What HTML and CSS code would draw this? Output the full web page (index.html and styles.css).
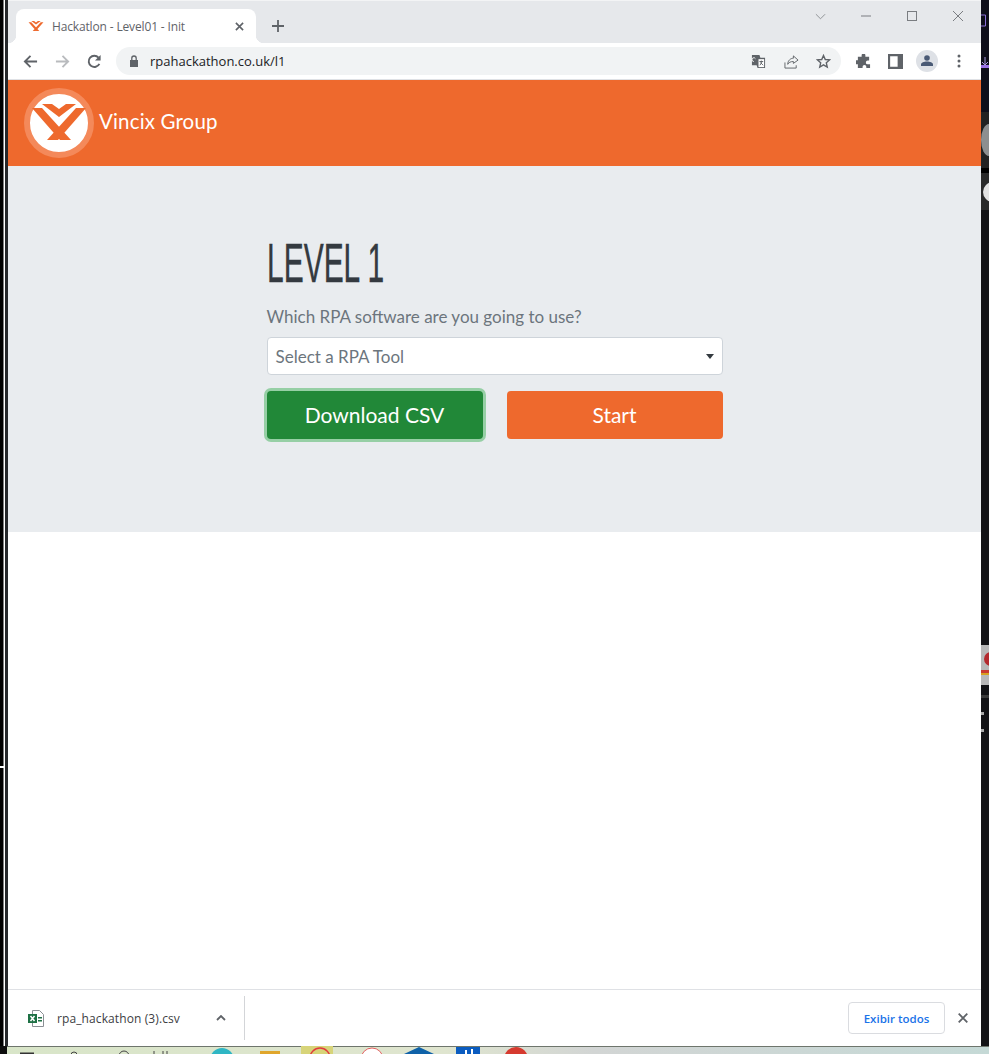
FILE: index.html
```html
<!DOCTYPE html>
<html lang="en">
<head>
<meta charset="utf-8">
<title>Hackatlon - Level01 - Init</title>
<link rel="stylesheet" href="styles.css">
</head>
<body>
<div class="desktop">
  <svg class="edge" viewBox="0 0 8 1046" aria-hidden="true">
    <rect width="8" height="1046" fill="#fff"/>
    <rect width="3.5" height="766" fill="#000"/>
    <rect y="768" width="3.5" height="278" fill="#000"/>
    <rect x="5" width="3" height="1046" fill="#26282b"/>
  </svg>
  <main class="window">
    <div class="tabstrip">
      <div class="tab">
        <svg class="favicon" viewBox="30 102 58 40" aria-hidden="true"><path fill="#ee692d" d="M32 108h10l29 32H60zM76 108h10L58 140H47zM42 104h10l7 5 7-5h10l-17 13z"/></svg>
        <span class="tab-title">Hackatlon - Level01 - Init</span>
        <svg class="tab-close" viewBox="0 0 10 10" aria-hidden="true"><path d="M1 1l8 8M9 1l-8 8"/></svg>
      </div>
      <svg class="new-tab" viewBox="0 0 12 12" aria-hidden="true"><path d="M6 0v12M0 6h12"/></svg>
      <div class="win-controls">
        <span class="win-btn"><svg viewBox="0 0 12 7" class="win-chevron" aria-hidden="true"><path d="M1 1l5 5 5-5"/></svg></span>
        <span class="win-btn"><svg viewBox="0 0 10 10" class="win-icon" aria-hidden="true"><path d="M0 5h10"/></svg></span>
        <span class="win-btn"><svg viewBox="0 0 10 10" class="win-icon" aria-hidden="true"><rect x=".5" y=".5" width="9" height="9"/></svg></span>
        <span class="win-btn"><svg viewBox="0 0 10 10" class="win-icon" aria-hidden="true"><path d="M0 0l10 10M10 0L0 10"/></svg></span>
      </div>
    </div>
    <div class="toolbar">
      <span class="tool"><svg viewBox="0 0 16 16" class="ico-stroke" aria-hidden="true"><path d="M15 8H2M8 2L2 8l6 6"/></svg></span>
      <span class="tool"><svg viewBox="0 0 16 16" class="ico-stroke ico-off" aria-hidden="true"><path d="M1 8h13M8 2l6 6-6 6"/></svg></span>
      <span class="tool"><svg viewBox="0 0 16 16" class="ico-stroke" aria-hidden="true"><path d="M13.2 10.5A6 6 0 1 1 12.3 3.8"/><path class="ico-fill" d="M14.5 1v6h-6z"/></svg></span>
      <div class="omnibox">
        <svg class="lock" viewBox="0 0 10 12" aria-hidden="true"><path d="M1 5h8v7H1z"/><path class="lock-arc" d="M2.800 5V3.200a2.200 2.200 0 0 1 4.400 0V5"/></svg>
        <span class="url">rpahackathon.co.uk/l1</span>
        <div class="omni-icons">
          <span class="omni-icon"><svg viewBox="0 0 16 16" aria-hidden="true"><path fill="#5f6368" d="M1 1h8l1 3h5v11H7l-1-3H1z"/><path fill="#fff" d="M8 5.500h6v8.500H8z"/><path fill="none" stroke="#fff" d="M3 8a2 2 0 1 1 1.700-3"/><path fill="none" stroke="#5f6368" d="M9 8h4M11 7v1M12 8l-2.500 4M10 9l3 3"/></svg></span>
          <span class="omni-icon"><svg viewBox="0 0 16 16" class="ico-thin" aria-hidden="true"><path d="M1 9v6h12v-3"/><path d="M4 11c0-4 3-6.500 6-6.500V2l5 4.500L10 10V8c-3 0-5 1-6 3z"/></svg></span>
          <span class="omni-icon"><svg viewBox="0 0 16 16" class="ico-thin ico-bold" aria-hidden="true"><path d="M8 1.600l1.900 4.300 4.600.4-3.500 3.100 1 4.600L8 11.600l-4 2.400 1-4.600-3.500-3.100 4.600-.4z"/></svg></span>
        </div>
      </div>
      <span class="tool tool-first"><svg viewBox="0 0 16 16" aria-hidden="true"><path fill="#5f6368" d="M6 1.500a2 2 0 0 1 4 0V3h4v4h-1.500a2 2 0 0 0 0 4H15v4h-4v-1.300a2 2 0 0 0-4 0V15H2v-4H.8a2.200 2.200 0 0 1 0-4.400H2V3h4z"/></svg></span>
      <span class="tool"><svg viewBox="0 0 14 14" aria-hidden="true"><path fill="#5f6368" fill-rule="evenodd" d="M0 0h14v14H0zM2 2v10h7V2z"/></svg></span>
      <span class="tool"><span class="avatar"><svg viewBox="0 0 12 12" aria-hidden="true"><circle cx="6" cy="3" r="2.800" fill="#4a5a75"/><path fill="#4a5a75" d="M0 11V9.500C0 7.500 3 6.500 6 6.500s6 1 6 3V11z"/></svg></span></span>
      <span class="tool"><svg viewBox="0 0 4 14" class="dots" aria-hidden="true"><circle cx="2" cy="2" r="1.500"/><circle cx="2" cy="7" r="1.500"/><circle cx="2" cy="12" r="1.500"/></svg></span>
    </div>
    <header class="site-header">
      <span class="logo"><svg viewBox="24 88 70 70" aria-hidden="true"><circle cx="59" cy="123" r="32" fill="#fff" stroke="#f4895a" stroke-width="6"/><path fill="#ee692d" d="M32 108h10l29 32H60zM76 108h10L58 140H47zM42 104h10l7 5 7-5h10l-17 13z"/></svg></span>
      <span class="brand">Vincix Group</span>
    </header>
    <section class="hero">
      <div class="hero-inner">
        <h1 class="title">LEVEL 1</h1>
        <p class="prompt">Which RPA software are you going to use?</p>
        <div class="select"><span>Select a RPA Tool</span><span class="caret"></span></div>
        <div class="actions">
          <button class="btn btn-green" type="button">Download CSV</button>
          <button class="btn btn-orange" type="button">Start</button>
        </div>
      </div>
    </section>
    <div class="blank"></div>
    <footer class="downloads">
      <svg class="xl" viewBox="0 0 16 17" aria-hidden="true"><path fill="#fff" stroke="#8a8f94" d="M4.500.5h7l4 4v12h-11z"/><rect y="4" width="9" height="9" fill="#1e7145"/><path stroke="#fff" stroke-width="1.500" d="M2.500 6l4 5M6.500 6l-4 5"/><path fill="#1e7145" d="M10 7h4v1.500h-4zM10 10h4v1.500h-4z"/></svg>
      <span class="file-name">rpa_hackathon (3).csv</span>
      <svg class="file-caret" viewBox="0 0 10 6" aria-hidden="true"><path d="M1 5l4-4 4 4"/></svg>
      <span class="divider"></span>
      <button class="show-all" type="button">Exibir todos</button>
      <svg class="bar-close" viewBox="0 0 10 10" aria-hidden="true"><path d="M.7.700l8.600 8.600M9.300.700L.7 9.300"/></svg>
    </footer>
  </main>
  <svg class="edge" viewBox="0 0 8 1046" aria-hidden="true">
    <rect width="8" height="1046" fill="#131316"/>
    <rect width="8" height="112" fill="#0e0e1a"/>
    <path d="M0 15h4.500v11H0" fill="none" stroke="#8a6fd8"/>
    <path d="M4 57v8M1 62l3 3 3-3" fill="none" stroke="#a999dd"/>
    <rect y="65" width="8" height="3" fill="#9a72e4"/>
    <rect y="112" width="8" height="56" fill="#222"/>
    <ellipse cx="8" cy="140" rx="8" ry="16" fill="#8d8f90"/>
    <rect y="168" width="8" height="5" fill="#000"/>
    <rect y="173" width="8" height="37" fill="#2a2a2a"/>
    <circle cx="12" cy="192" r="10" fill="#e2e2e2"/>
    <rect y="645" width="8" height="40" fill="#b8b8b8"/>
    <circle cx="10" cy="659" r="7" fill="#b32a2e"/>
    <rect y="670" width="8" height="3" fill="#c93a30"/>
    <rect y="673" width="8" height="2" fill="#d8a020"/>
    <rect y="695" width="8" height="3" fill="#3a3a3a"/>
    <rect y="712" width="3" height="3" fill="#aaa"/>
    <rect y="729" width="3" height="3" fill="#aaa"/>
  </svg>
  <svg class="taskbar" viewBox="0 0 989 8" preserveAspectRatio="none" aria-hidden="true">
    <defs><linearGradient id="tb" x1="0" x2="1" y1="0" y2="0"><stop offset="0" stop-color="#d8e5c8"/><stop offset=".45" stop-color="#dfe5cf"/><stop offset=".6" stop-color="#d2d5d4"/><stop offset="1" stop-color="#c5d9d6"/></linearGradient></defs>
    <rect width="989" height="8" fill="url(#tb)"/>
    <rect width="989" height="1" fill="#6e756c"/>
    <rect width="7" height="8" fill="#0c0c0c"/>
    <rect x="20" y="6.500" width="14" height="1.500" fill="#333"/>
    <circle cx="74" cy="9" r="3" fill="none" stroke="#444"/>
    <circle cx="124" cy="10" r="5" fill="none" stroke="#444"/>
    <path d="M154 5v3M163 5v3M167 5v3" stroke="#444"/>
    <circle cx="222" cy="14" r="12" fill="#2fb6c4"/>
    <rect x="260" y="5" width="20" height="3" fill="#e0a62c"/>
    <rect x="301" y="0" width="32" height="8" fill="#d7d479"/>
    <circle cx="320" cy="12" r="10" fill="none" stroke="#e23c3c" stroke-width="1.500"/>
    <ellipse cx="372" cy="13" rx="11" ry="11" fill="#fff" stroke="#e26060"/>
    <path d="M404 8l15-7 15 7z" fill="#0f62a8"/>
    <rect x="456" y="1" width="24" height="7" fill="#0b5cc0"/>
    <path d="M466 4v4M472 3v5" stroke="#fff" stroke-width="2"/>
    <circle cx="516" cy="13" r="12" fill="#d63a2f"/>
  </svg>
</div>
</body>
</html>
```
FILE: styles.css
```css
* { box-sizing: border-box; }
html, body { margin: 0; height: 100%; }
body { background: #fff; font-family: "Lato", "Liberation Sans", sans-serif; overflow: hidden; }

.desktop {
  width: 989px;
  height: 1054px;
  display: grid;
  grid-template-columns: 8px 973px 8px;
  grid-template-rows: 1046px 8px;
}
.edge { width: 8px; height: 1046px; display: block; }
.taskbar { grid-column: 1 / 4; width: 989px; height: 8px; display: block; }
.window { display: flex; flex-direction: column; background: #fff; min-width: 0; }

/* Browser chrome */
.tabstrip {
  height: 43px;
  flex: none;
  display: flex;
  align-items: flex-start;
  background: #e6e8eb;
  border-top: 1px solid #f3f4f5;
  padding-left: 8px;
}
.tab {
  position: relative;
  width: 240px;
  height: 34px;
  margin-top: 8px;
  background: #fff;
  border-radius: 8px 8px 0 0;
  display: flex;
  align-items: center;
  padding: 0 12px;
  gap: 8px;
}
.tab::before, .tab::after {
  content: "";
  position: absolute;
  bottom: 0;
  width: 8px;
  height: 8px;
}
.tab::before { left: -8px; background: radial-gradient(circle at 0 0, transparent 8px, #fff 8.500px); }
.tab::after { right: -8px; background: radial-gradient(circle at 100% 0, transparent 8px, #fff 8.500px); }
.favicon { width: 16px; height: 12px; flex: none; }
.tab-title {
  flex: 1;
  font: 12px "Open Sans", "Noto Sans", sans-serif;
  letter-spacing: -.15px;
  color: #5f6368;
  white-space: nowrap;
}
.tab-close { width: 9px; height: 9px; flex: none; fill: none; stroke: #5f6368; stroke-width: 1.800; }
.new-tab { width: 12px; height: 12px; margin: 19px 0 0 16px; fill: none; stroke: #5f6368; stroke-width: 1.800; flex: none; }
.win-controls { margin-left: auto; display: flex; }
.win-btn { width: 46px; height: 30px; display: flex; align-items: center; justify-content: center; }
.win-icon { width: 10px; height: 10px; fill: none; stroke: #7a7d81; stroke-width: 1; }
.win-chevron { width: 11px; height: 7px; fill: none; stroke: #8a8c90; stroke-width: 1; }

.toolbar {
  height: 37px;
  flex: none;
  display: flex;
  align-items: center;
  padding: 0 6px;
  background: #fff;
  border-bottom: 1px solid #dfe1e5;
}
.tool { width: 32px; height: 32px; display: flex; align-items: center; justify-content: center; flex: none; }
.tool svg { width: 15px; height: 15px; }
.tool .dots { width: 4px; height: 14px; fill: #5f6368; }
.ico-stroke { fill: none; stroke: #5f6368; stroke-width: 2; }
.ico-fill { fill: #5f6368; stroke: none; }
.ico-off { stroke: #b9bbbe; }
.omnibox {
  flex: 1;
  height: 28px;
  margin: 0 0 0 6px;
  background: #f1f3f4;
  border-radius: 14px;
  display: flex;
  align-items: center;
  padding-left: 13px;
  min-width: 0;
}
.lock { width: 10px; height: 12px; fill: #5f6368; flex: none; }
.lock-arc { fill: none; stroke: #5f6368; stroke-width: 1.300; }
.url { margin-left: 11px; font: 13px "Open Sans", "Noto Sans", sans-serif; color: #202124; }
.omni-icons { margin-left: auto; margin-right: 2px; display: flex; }
.omni-icon { width: 32px; height: 28px; display: flex; align-items: center; justify-content: center; }
.omni-icon svg { width: 15px; height: 15px; }
.omni-icon:first-child { margin-right: 1px; margin-left: -1px; }
.ico-thin { fill: none; stroke: #5f6368; stroke-width: 1; }
.ico-bold { stroke-width: 1.500; }
.tool-first { margin-left: 6px; }
.avatar { width: 22px; height: 22px; border-radius: 50%; background: #dee1e6; display: flex; align-items: center; justify-content: center; }
.avatar svg { width: 12px; height: 12px; }

/* Page */
.site-header {
  height: 86px;
  flex: none;
  background: #ee692d;
  display: flex;
  align-items: center;
  padding-left: 16px;
  gap: 5px;
}
.logo { width: 70px; height: 70px; flex: none; }
.logo svg { width: 70px; height: 70px; display: block; }
.brand { color: #fff; font-size: 20.500px; letter-spacing: .15px; margin-top: -5px; }

.hero { height: 366px; flex: none; background: #e9ecef; padding-top: 63px; }
.hero-inner { width: 456px; margin: 0 auto; }
.title {
  margin: 0;
  height: 68px;
  font: 400 56px/68px "Liberation Sans", sans-serif;
  color: #343a40;
  -webkit-text-stroke: .4px #343a40;
  white-space: nowrap;
  transform: scaleX(.535);
  transform-origin: 0 0;
}
.prompt { margin: 8px 0 8px; font-size: 17px; line-height: 24px; color: #6c757d; }
.select {
  height: 38px;
  background: #fff;
  border: 1px solid #ced4da;
  border-radius: 4px;
  display: flex;
  align-items: center;
  justify-content: space-between;
  padding: 0 8px;
  font-size: 17px;
  color: #6c757d;
}
.caret { border: 4px solid transparent; border-top: 5px solid #343a40; border-bottom: 0; }
.actions { margin-top: 16px; display: grid; grid-template-columns: 216px 216px; gap: 24px; }
.btn {
  height: 48px;
  border: 0;
  border-radius: 4px;
  color: #fff;
  font: 21px "Lato", "Liberation Sans", sans-serif;
  padding: 0 0 2px;
}
.btn-green { background: #218838; box-shadow: 0 0 0 3px #96cfa5; }
.btn-orange { background: #ee692d; }
.blank { flex: 1; background: #fff; }

.downloads {
  height: 57px;
  flex: none;
  display: flex;
  align-items: center;
  background: #fff;
  border-top: 1px solid #dfe1e5;
  padding: 0 13px 0 20px;
}
.xl { width: 16px; height: 17px; flex: none; }
.file-name { margin-left: 13px; width: 124px; font: 12px "Open Sans", "Noto Sans", sans-serif; letter-spacing: .1px; color: #3c4043; white-space: nowrap; }
.file-caret { width: 10px; height: 6px; margin-left: 35px; fill: none; stroke: #5f6368; stroke-width: 1.800; flex: none; }
.divider { width: 1px; height: 44px; margin-left: 18px; background: #d3d5d8; flex: none; }
.show-all {
  margin-left: auto;
  width: 97px;
  height: 32px;
  background: #fff;
  border: 1px solid #dadce0;
  border-radius: 4px;
  color: #1a73e8;
  font: 600 11.500px "Open Sans", "Noto Sans", sans-serif;
  padding: 0;
}
.bar-close { width: 10px; height: 10px; margin-left: 13px; fill: none; stroke: #5f6368; stroke-width: 1.800; flex: none; }
```
